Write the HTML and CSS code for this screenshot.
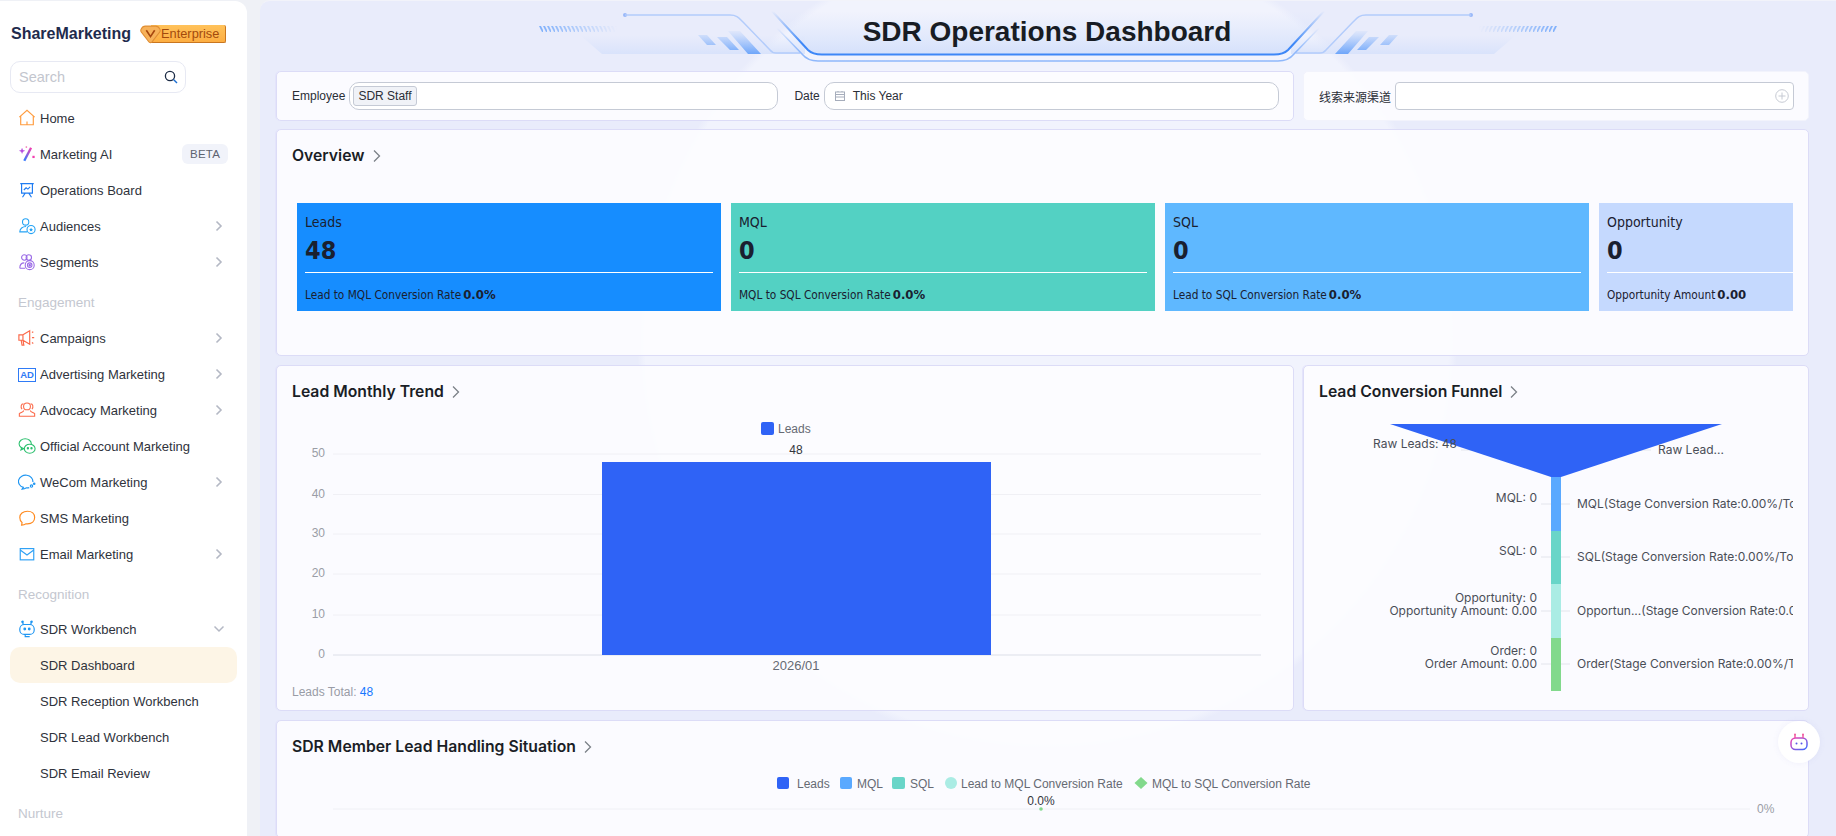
FILE: index.html
```html
<!DOCTYPE html>
<html lang="en">
<head>
<meta charset="utf-8">
<title>SDR Operations Dashboard</title>
<link rel="stylesheet" href="styles.css">
</head>
<body>
<div class="app">
  <aside class="sidebar">
    <div class="brand">
      <span class="brand-name">ShareMarketing</span>
      <span class="edition">
        <svg class="edition-gem" viewBox="0 0 20 18"><path d="M5 1h10c2 0 3 1 4 3 .5 1 .3 2-.5 3l-7 9c-1 1-2 1-3 0l-7-9C.7 6 .5 5 1 4c1-2 2-3 4-3z" fill="#f7b25a" stroke="#e08f35"/><path d="M6 5l4 6 4-6" fill="none" stroke="#a8480f" stroke-width="1.600"/></svg>
        <span class="edition-text">Enterprise</span>
      </span>
    </div>
    <div class="search">
      <span class="search-text">Search</span>
      <svg class="search-icon" viewBox="0 0 14 14"><circle cx="6" cy="6" r="4.600" fill="none" stroke="#1c2b45" stroke-width="1.300"/><path d="M9.500 9.500L13 13" stroke="#1c6fd1" stroke-width="1.400"/></svg>
    </div>
    <nav class="nav">
      <a class="nav-item"><svg class="nav-icon" viewBox="0 0 20 20" fill="none" stroke="#ff9c3f" stroke-width="1.300"><path d="M1.500 9L10 1.500 18.500 9M3 8v9.500h14V8M10 17.500v-3.500"/></svg><span>Home</span></a>
      <a class="nav-item"><svg class="nav-icon" viewBox="0 0 20 20"><defs><linearGradient id="wand" x1="0" y1="1" x2="1" y2="0"><stop offset="0" stop-color="#2f7bff"/><stop offset="1" stop-color="#f23fb0"/></linearGradient></defs><path d="M14.500 3L7 17.500" stroke="url(#wand)" stroke-width="2.600" fill="none"/><path d="M4.500 3l1 2.500 2.500 1-2.500 1-1 2.500-1-2.500L1 6.500l2.500-1z" fill="#b84fe0"/><rect x="16" y="12" width="2.500" height="2.500" fill="#f23fb0"/><rect x="8.500" y="1.500" width="1.600" height="1.600" fill="#f26fb0"/></svg><span>Marketing AI</span><span class="beta">BETA</span></a>
      <a class="nav-item"><svg class="nav-icon" viewBox="0 0 20 20" fill="none" stroke="#1f7cf2" stroke-width="1.300"><path d="M2.500 3h15M4 3v10.500h12V3M6.500 10l2.500-2.500 2 1.500 2.500-2.500M8 13.500L5 18M12 13.500l3 4.500"/></svg><span>Operations Board</span></a>
      <a class="nav-item"><svg class="nav-icon" viewBox="0 0 20 20" fill="none" stroke="#25a3f5" stroke-width="1.200"><circle cx="8.500" cy="5.500" r="3.500"/><path d="M9 10.500c-4 0-7 2.500-7 6h8"/><circle cx="14.500" cy="14" r="4.500"/><path d="M14.500 11.800l.7 1.500 1.500.2-1.100 1 .3 1.500-1.400-.8-1.400.8.300-1.500-1.100-1 1.500-.2z" fill="#25a3f5" stroke="none"/></svg><span>Audiences</span><svg class="chev" viewBox="0 0 8 12"><path d="M1.500 1.500L6 6l-4.500 4.500" fill="none" stroke="#b4b8c4" stroke-width="1.600"/></svg></a>
      <a class="nav-item"><svg class="nav-icon" viewBox="0 0 20 20" fill="none" stroke="#9a6ae6" stroke-width="1.200"><circle cx="7" cy="5" r="3"/><circle cx="12" cy="5" r="3"/><path d="M2 17c0-4 2-6 5-6M2 17h6"/><circle cx="13" cy="13.500" r="5"/><circle cx="13" cy="13.500" r="2.500"/><circle cx="13" cy="13.500" r=".8" fill="#9a6ae6"/></svg><span>Segments</span><svg class="chev" viewBox="0 0 8 12"><path d="M1.500 1.500L6 6l-4.500 4.500" fill="none" stroke="#b4b8c4" stroke-width="1.600"/></svg></a>
      <div class="nav-group">Engagement</div>
      <a class="nav-item"><svg class="nav-icon" viewBox="0 0 20 20" fill="none" stroke="#fb6a4a" stroke-width="1.300"><path d="M1 6.500h4.500v6H1zM5.500 6.500L13 2v15L5.500 12.500M3.500 12.500l1 5.500h2l-1-5.500M15.500 4l1.500-1M15.500 9.500H18M15.500 15l1.500 1"/></svg><span>Campaigns</span><svg class="chev" viewBox="0 0 8 12"><path d="M1.500 1.500L6 6l-4.500 4.500" fill="none" stroke="#b4b8c4" stroke-width="1.600"/></svg></a>
      <a class="nav-item"><span class="nav-icon ad-icon">AD</span><span>Advertising Marketing</span><svg class="chev" viewBox="0 0 8 12"><path d="M1.500 1.500L6 6l-4.500 4.500" fill="none" stroke="#b4b8c4" stroke-width="1.600"/></svg></a>
      <a class="nav-item"><svg class="nav-icon" viewBox="0 0 20 20" fill="none" stroke="#fb6a4a" stroke-width="1.200"><circle cx="10" cy="6" r="3.800"/><path d="M6.500 10.500c-1 2-3 2-5 3.500v3h17v-3c-2-1.500-4-1.500-5-3.500M6 3c-2.500 0-3.500 4 -1.500 6M14 3c2.500 0 3.500 4 1.500 6"/></svg><span>Advocacy Marketing</span><svg class="chev" viewBox="0 0 8 12"><path d="M1.500 1.500L6 6l-4.500 4.500" fill="none" stroke="#b4b8c4" stroke-width="1.600"/></svg></a>
      <a class="nav-item"><svg class="nav-icon" viewBox="0 0 20 20" fill="none" stroke="#2dc06f" stroke-width="1.200"><ellipse cx="8" cy="7.500" rx="6.800" ry="5.500"/><path d="M4 12l-.8 2.500 3-1.500"/><ellipse cx="13" cy="13" rx="6" ry="5" fill="#fff"/><circle cx="11" cy="12.500" r=".7" fill="#2dc06f"/><circle cx="15" cy="12.500" r=".7" fill="#2dc06f"/></svg><span>Official Account Marketing</span></a>
      <a class="nav-item"><svg class="nav-icon" viewBox="0 0 20 20" fill="none" stroke="#1f96f2" stroke-width="1.300"><path d="M16.500 10A8 7 0 1 0 6 16l-1.500 2c2 0 3.500-.5 5-1.500 1 0 2 0 3-.3"/><circle cx="15" cy="14.500" r="1.300"/><circle cx="18" cy="12" r=".8"/></svg><span>WeCom Marketing</span><svg class="chev" viewBox="0 0 8 12"><path d="M1.500 1.500L6 6l-4.500 4.500" fill="none" stroke="#b4b8c4" stroke-width="1.600"/></svg></a>
      <a class="nav-item"><svg class="nav-icon" viewBox="0 0 20 20" fill="none" stroke="#ff8a1f" stroke-width="1.300"><path d="M10.500 2.500c-5 0-8.500 3-8.500 7 0 2.500 1 4.500 2.500 5.500L4 18c2 0 3.500-.5 5-1.500h1.500c5 0 8-3 8-7s-3-7-8-7z"/></svg><span>SMS Marketing</span></a>
      <a class="nav-item"><svg class="nav-icon" viewBox="0 0 20 20" fill="none" stroke="#2fa1f5" stroke-width="1.300"><rect x="2.500" y="4" width="15" height="12.500"/><path d="M2.500 5.500L10 11l7.500-5.500"/></svg><span>Email Marketing</span><svg class="chev" viewBox="0 0 8 12"><path d="M1.500 1.500L6 6l-4.500 4.500" fill="none" stroke="#b4b8c4" stroke-width="1.600"/></svg></a>
      <div class="nav-group nav-group-tight">Recognition</div>
      <a class="nav-item"><svg class="nav-icon" viewBox="0 0 20 20" fill="none" stroke="#1f96f2" stroke-width="1.300"><rect x="2" y="5" width="16" height="11" rx="5"/><path d="M6 5L5 2.500M14 5l1-2.500"/><circle cx="5" cy="2" r=".8" fill="#1f96f2"/><circle cx="15" cy="2" r=".8" fill="#1f96f2"/><circle cx="7.500" cy="10" r=".9" fill="#1f96f2"/><circle cx="12.500" cy="10" r=".9" fill="#1f96f2"/><path d="M8 16v2.500h5"/></svg><span>SDR Workbench</span><svg class="chev-down" viewBox="0 0 12 8"><path d="M1.500 1.500L6 6l4.500-4.500" fill="none" stroke="#b4b8c4" stroke-width="1.500"/></svg></a>
      <a class="nav-item is-active"><span class="nav-blank"></span><span>SDR Dashboard</span></a>
      <a class="nav-item"><span class="nav-blank"></span><span>SDR Reception Workbench</span></a>
      <a class="nav-item"><span class="nav-blank"></span><span>SDR Lead Workbench</span></a>
      <a class="nav-item"><span class="nav-blank"></span><span>SDR Email Review</span></a>
      <div class="nav-group">Nurture</div>
    </nav>
  </aside>

  <main class="main">
    <header class="page-head">
      <svg class="head-art" viewBox="0 0 1036 70">
        <defs>
          <linearGradient id="panel" x1="0" y1="0" x2="0" y2="1"><stop offset="0" stop-color="#dbe4fb" stop-opacity="0"/><stop offset="1" stop-color="#d9e3fb"/></linearGradient>
          <linearGradient id="center" x1="0" y1="0" x2="0" y2="1"><stop offset="0" stop-color="#dbe4fb" stop-opacity="0"/><stop offset="1" stop-color="#d5e1fb"/></linearGradient>
          <linearGradient id="bright" x1="0" y1="0" x2="0" y2="1"><stop offset="0" stop-color="#3d87f7" stop-opacity="0"/><stop offset=".75" stop-color="#3d87f7"/></linearGradient>
          <linearGradient id="pale" x1="0" y1="0" x2="0" y2="1"><stop offset="0" stop-color="#7fb0fb" stop-opacity="0"/><stop offset=".7" stop-color="#8fb8fb"/></linearGradient>
          <linearGradient id="slash" x1="0" y1="0" x2="0" y2="1"><stop offset="0" stop-color="#8db8fb" stop-opacity=".1"/><stop offset="1" stop-color="#6ea6fa"/></linearGradient>
          <linearGradient id="hatch-fade" x1="0" y1="0" x2="1" y2="0"><stop offset="0" stop-color="#7fb0fb"/><stop offset="1" stop-color="#7fb0fb" stop-opacity="0"/></linearGradient>
          <pattern id="hatch" width="4" height="6" patternUnits="userSpaceOnUse"><path d="M0 0h2l3 6H3z" fill="#fff"/></pattern>
          <mask id="hatch-mask"><rect width="90" height="6" fill="url(#hatch)"/></mask>
          <g id="wing">
            <path d="M50 35L72 54H275V35z" fill="url(#panel)"/>
            <g mask="url(#hatch-mask)" transform="translate(9 26)"><rect width="78" height="6" fill="url(#hatch-fade)"/></g>
            <path d="M198 31H210L231 54H218zM187 37H197L209 50H200zM168 35H177L186 45H177z" fill="url(#slash)"/>
            <circle cx="95" cy="15" r="2" fill="#9ab9f8"/>
            <path d="M95 15H200c7 0 9 3 13 7L240 50c2 2.500 3 3 6 3H270" fill="none" stroke="#b3ccfb" stroke-width="1.500"/>
          </g>
        </defs>
        <path d="M246 11L278 50C281 53 285 54 292 54H744C751 54 755 53 758 50L790 11z" fill="url(#center)"/>
        <use href="#wing"/>
        <use href="#wing" transform="translate(1036 0) scale(-1 1)"/>
        <path d="M242 11L278 50C281 53 285 54.500 292 54.500H744C751 54.500 755 53 758 50L794 11" fill="none" stroke="url(#bright)" stroke-width="2"/>
        <path d="M247 28L272 54C276 59 280 61 288 61H748C756 61 760 59 764 54L789 28" fill="none" stroke="url(#pale)" stroke-width="1.500"/>
      </svg>
      <h1 class="page-title">SDR Operations Dashboard</h1>
    </header>

    <div class="board">
      <section class="card filter-card">
        <span class="filter-label">Employee</span>
        <div class="field field-employee"><span class="tag">SDR Staff</span></div>
        <span class="filter-label filter-date">Date</span>
        <div class="field field-date">
          <svg class="cal" viewBox="0 0 12 12" fill="none" stroke="#a6adbb"><rect x="1.500" y="2" width="9" height="8.500"/><path d="M1.500 4.500h9M1.500 7h9M4 1v1M8 1v1"/></svg>
          <span>This Year</span>
        </div>
      </section>
      <section class="card filter-card filter-channel">
        <span class="filter-label">线索来源渠道</span>
        <div class="field field-channel">
          <svg class="plus" viewBox="0 0 14 14" fill="none" stroke="#c6cad3"><circle cx="7" cy="7" r="6.300"/><path d="M7 3.500v7M3.500 7h7"/></svg>
        </div>
      </section>

      <section class="card overview span-2">
        <h2 class="card-title">Overview <svg class="title-chev" viewBox="0 0 8 14"><path d="M1 1.500L6.500 7 1 12.500" fill="none" stroke="#7b8088" stroke-width="1.300"/></svg></h2>
        <div class="kpis">
          <article class="kpi kpi-leads">
            <div class="kpi-name">Leads</div><div class="kpi-value">48</div>
            <div class="kpi-foot">Lead to MQL Conversion Rate<b>0.0%</b></div>
          </article>
          <article class="kpi kpi-mql">
            <div class="kpi-name">MQL</div><div class="kpi-value">0</div>
            <div class="kpi-foot">MQL to SQL Conversion Rate<b>0.0%</b></div>
          </article>
          <article class="kpi kpi-sql">
            <div class="kpi-name">SQL</div><div class="kpi-value">0</div>
            <div class="kpi-foot">Lead to SQL Conversion Rate<b>0.0%</b></div>
          </article>
          <article class="kpi kpi-opp">
            <div class="kpi-name">Opportunity</div><div class="kpi-value">0</div>
            <div class="kpi-foot">Opportunity Amount<b>0.00</b></div>
          </article>
        </div>
      </section>

      <section class="card chart-card">
        <h2 class="card-title">Lead Monthly Trend <svg class="title-chev" viewBox="0 0 8 14"><path d="M1 1.500L6.500 7 1 12.500" fill="none" stroke="#7b8088" stroke-width="1.300"/></svg></h2>
        <svg class="chart chart-trend" viewBox="0 0 1016 261" width="1016" height="261">
          <rect x="484" y="0" width="13" height="13" rx="2" fill="#2f63f6"/>
          <text class="t-legend" x="501" y="10.500">Leads</text>
          <g stroke="#f0f0f5">
            <path d="M56 32H984M56 72.500H984M56 112H984M56 152H984M56 193H984"/>
          </g>
          <path d="M56 233H984" stroke="#dcdfe8"/>
          <g class="t-axis" text-anchor="end">
            <text x="48" y="35">50</text><text x="48" y="75.500">40</text><text x="48" y="115">30</text><text x="48" y="155">20</text><text x="48" y="196">10</text><text x="48" y="236">0</text>
          </g>
          <rect x="325" y="40" width="389" height="193" fill="#2f63f6"/>
          <text class="t-value" x="519" y="32" text-anchor="middle">48</text>
          <text class="t-cat" x="519" y="248" text-anchor="middle">2026/01</text>
        </svg>
        <div class="total">Leads Total: <span class="total-num">48</span></div>
      </section>

      <section class="card chart-card">
        <h2 class="card-title">Lead Conversion Funnel <svg class="title-chev" viewBox="0 0 8 14"><path d="M1 1.500L6.500 7 1 12.500" fill="none" stroke="#7b8088" stroke-width="1.300"/></svg></h2>
        <svg class="chart chart-funnel" viewBox="0 0 489 290" width="489" height="290">
          <path d="M157 26H240M260 26H347M237 80H247M257 80H266M237 133H247M257 133H266M237 187H247M257 187H266M237 240H247M257 240H266" stroke="#e3e5ec" fill="none"/>
          <path d="M86 0H418L257 53h-10z" fill="#2f63f6"/>
          <rect x="247" y="53" width="10" height="54" fill="#5aa9ff"/>
          <rect x="247" y="107" width="10" height="53" fill="#69d5c8"/>
          <rect x="247" y="160" width="10" height="54" fill="#aaece4"/>
          <rect x="247" y="214" width="10" height="53" fill="#82d98c"/>
          <g class="t-funnel" text-anchor="end">
            <text x="153" y="23.500">Raw Leads: 48</text>
            <text x="233" y="77.500">MQL: 0</text>
            <text x="233" y="130.500">SQL: 0</text>
            <text x="233" y="178">Opportunity: 0</text>
            <text x="233" y="190.500">Opportunity Amount: 0.00</text>
            <text x="233" y="231">Order: 0</text>
            <text x="233" y="243.500">Order Amount: 0.00</text>
          </g>
          <g class="t-funnel">
            <text x="354" y="29.500">Raw Lead...</text>
            <text x="273" y="83.500">MQL(Stage Conversion Rate:0.00%/Total Conversion Rate:0.00%)</text>
            <text x="273" y="136.500">SQL(Stage Conversion Rate:0.00%/Total Conversion Rate:0.00%)</text>
            <text x="273" y="190.500">Opportun...(Stage Conversion Rate:0.00%/Total Conversion Rate:0.00%)</text>
            <text x="273" y="243.500">Order(Stage Conversion Rate:0.00%/Total Conversion Rate:0.00%)</text>
          </g>
        </svg>
      </section>

      <section class="card member-card span-2">
        <h2 class="card-title">SDR Member Lead Handling Situation <svg class="title-chev" viewBox="0 0 8 14"><path d="M1 1.500L6.500 7 1 12.500" fill="none" stroke="#7b8088" stroke-width="1.300"/></svg></h2>
        <svg class="chart" viewBox="0 0 1530 60" width="1530" height="60">
          <rect x="500" y="0" width="12" height="12" rx="2" fill="#2f63f6"/><text class="t-legend" x="520" y="10.500">Leads</text>
          <rect x="563" y="0" width="12" height="12" rx="2" fill="#5aa9ff"/><text class="t-legend" x="580" y="10.500">MQL</text>
          <rect x="615" y="0" width="13" height="12" rx="2" fill="#69d5c8"/><text class="t-legend" x="633" y="10.500">SQL</text>
          <circle cx="674" cy="6" r="6" fill="#aaece4"/><text class="t-legend" x="684" y="10.500">Lead to MQL Conversion Rate</text>
          <path d="M864 0l6.500 6-6.500 6-6.500-6z" fill="#82d98c"/><text class="t-legend" x="875" y="10.500">MQL to SQL Conversion Rate</text>
          <path d="M56 32H1473" stroke="#eff0f5"/>
          <circle cx="764" cy="32" r="1.800" fill="#82d98c"/>
          <text class="t-value" x="764" y="28" text-anchor="middle">0.0%</text>
          <text class="t-axis" x="1480" y="36">0%</text>
        </svg>
      </section>
    </div>

    <button class="assistant" type="button" aria-label="Assistant">
      <svg viewBox="0 0 20 20" width="20" height="20" fill="none"><defs><linearGradient id="bot" x1="0" y1="0" x2="1" y2="1"><stop offset="0" stop-color="#f23fb0"/><stop offset="1" stop-color="#3a6cff"/></linearGradient></defs><rect x="2" y="6" width="16" height="11.500" rx="4.500" stroke="url(#bot)" stroke-width="1.500"/><path d="M6 6V3M14 6V3" stroke="#f0569f" stroke-width="1.400"/><circle cx="6" cy="2.500" r="1" fill="#f0569f"/><circle cx="14" cy="2.500" r="1" fill="#f0569f"/><circle cx="7.500" cy="11.500" r="1" fill="#5a55e8"/><circle cx="12.500" cy="11.500" r="1" fill="#5a55e8"/></svg>
    </button>
  </main>
</div>
</body>
</html>
```

FILE: styles.css
```css
* { box-sizing: border-box; }
html, body { margin: 0; height: 100%; overflow: hidden; }
body { font-family: "Liberation Sans", Arial, sans-serif; background: #eff1f6; color: #1e2229; }

.app { display: flex; height: 836px; }

/* Sidebar */
.sidebar { flex: 0 0 247px; margin-top: 1px; background: #fff; border-radius: 0 12px 0 0; padding: 21px 10px 0; overflow: hidden; }
.brand { display: flex; align-items: center; height: 24px; padding-left: 1px; }
.brand-name { font: 700 16px "Liberation Sans", sans-serif; color: #1f2b4d; white-space: nowrap; }
.edition { display: flex; align-items: center; margin-left: 9px; }
.edition-gem { width: 21px; height: 19px; margin-right: -10px; position: relative; z-index: 1; }
.edition-text { height: 18px; line-height: 17px; padding: 0 6px 0 10px; background: linear-gradient(#ffc25a, #fdae42); border: 1px solid #c9761f; border-width: 0 1px 1px 0; border-radius: 0 2px 2px 0; color: #a34a0d; font: 12.800px/17px "Liberation Sans", sans-serif; }
.search { display: flex; align-items: center; justify-content: space-between; width: 176px; height: 32px; margin-top: 15px; padding: 0 7px 0 8px; border: 1px solid #e7e9f3; border-radius: 10px; }
.search-text { font-size: 14.500px; color: #c3c6ce; }
.search-icon { width: 14px; height: 14px; }
.nav { margin-top: 7px; }
.nav-item { display: flex; align-items: center; height: 36px; padding: 0 14px 0 8px; border-radius: 10px; font-size: 13px; color: #2f333c; white-space: nowrap; }
.nav-item.is-active { background: #fdf5e6; }
.nav-icon { flex: 0 0 18px; width: 18px; height: 18px; margin-right: 4px; }
.nav-blank { flex: 0 0 22px; }
.ad-icon { display: block; border: 1.300px solid #2f7bf6; color: #2f7bf6; font: 700 9.500px/12px "Liberation Sans", sans-serif; text-align: center; height: 14px; margin-top: 1px; }
.chev { width: 8px; height: 12px; margin-left: auto; }
.chev-down { width: 12px; height: 8px; margin-left: auto; margin-right: -2px; }
.beta { margin-left: auto; margin-right: -5px; padding: 0 8px; height: 20px; line-height: 20px; border-radius: 6px; background: #f1f3fa; color: #5c6270; font-size: 11.500px; letter-spacing: .2px; }
.nav-group { display: flex; align-items: center; height: 32px; margin-top: 6px; margin-bottom: 2px; padding-left: 8px; font-size: 13.500px; color: #c4c7d0; }
.nav-group-tight { margin-bottom: 1px; }

/* Main */
.main { position: relative; flex: 1; margin-left: 13px; height: 836px; overflow: hidden; padding-left: 16px;
  background: radial-gradient(circle 410px at 787px 340px, #f1f3fd 0 98%, transparent 100%), #e9ecfb; border-radius: 10px 0 0 0; border-top: 1px solid #f2f3fa; }
.page-head { position: relative; display: flex; justify-content: center; align-items: center; height: 62px; margin-left: -16px; width: 1576px; padding-bottom: 1px; }
.head-art { position: absolute; left: 270px; top: -1px; width: 1036px; height: 70px; }
.page-title { position: relative; margin: 0; font: 700 28px "Liberation Sans", sans-serif; color: #181c24; transform: translateX(-1px); }
.board { display: grid; grid-template-columns: 1018px 506px; column-gap: 9px; row-gap: 9px; grid-template-rows: 49px 227px 346px auto; margin-top: 8px; }
.span-2 { grid-column: span 2; }
.card { background: rgba(253,253,255,.88); border: 1px solid #dcdcf7; border-radius: 5px; overflow: hidden; box-shadow: -1px 0 0 #e4e4fb; }
.filter-card { display: flex; align-items: center; height: 50px; padding: 0 14px 0 15px; font-size: 12px; color: #2a2e36; }
.filter-channel { border-color: #f2f3fc; box-shadow: none; padding-right: 14px; }
.filter-label { white-space: nowrap; margin-right: 4px; font-family: "Liberation Sans", "Noto Sans CJK SC", sans-serif; }
.filter-date { margin-left: 16px; margin-right: 4px; }
.field { display: flex; align-items: center; height: 28px; background: #fff; border: 1px solid #c5cad5; border-radius: 10px; }
.field-employee { width: 429px; padding-left: 3px; }
.field-date { flex: 1; padding-left: 9px; gap: 7px; }
.field-channel { flex: 1; border-radius: 4px; justify-content: flex-end; padding-right: 4px; }
.tag { padding: 0 4px; height: 20px; line-height: 18px; background: #f0f2f7; border: 1px solid #c5cad5; border-radius: 3px; font-size: 12px; }
.cal { width: 12px; height: 12px; }
.plus { width: 14px; height: 14px; }

.card-title { display: flex; align-items: center; gap: 8px; margin: 0; padding: 16px 15px 0; font: 600 15.750px/20px Inter, "Noto Sans CJK SC", sans-serif; color: #1a1e26; height: 36px; white-space: nowrap; }
.title-chev { width: 8px; height: 14px; }
.kpis { display: flex; gap: 10px; margin: 37px 15px 0 20px; overflow: hidden; height: 108px; }
.kpi { flex: 0 0 424px; height: 108px; padding: 10px 0 0 8px; color: #1a2030; font-family: "DejaVu Sans", sans-serif; font-stretch: condensed; }
.kpi:last-child { flex: 0 0 195px; }
.kpi-leads { background: #168dff; }
.kpi-mql { background: #53d1c3; }
.kpi-sql { background: #5fb8ff; }
.kpi-opp { background: #c5d9fe; }
.kpi-name { font-size: 14px; line-height: 18px; }
.kpi-value { font-size: 25px; font-weight: 700; line-height: 32px; margin-top: 4px; height: 38px; margin-right: 8px; border-bottom: 1px solid #fff; }
.kpi:last-child .kpi-value { margin-right: 0; }
.kpi-foot { margin-top: 14px; font-size: 11.750px; line-height: 16px; white-space: nowrap; }
.kpi-foot b { margin-left: 2px; font-size: 13px; }

.chart-card { position: relative; }
.chart { display: block; }
.chart-trend { margin-top: 20px; }
.chart-funnel { margin-top: 22px; overflow: hidden; }
.total { padding: 1px 15px; font-size: 12px; line-height: 16px; color: #999ca6; }
.total-num { color: #1677ff; }
.t-legend { font: 12px "Liberation Sans", sans-serif; fill: #666a73; }
.t-axis text, .t-axis { font: 12px "Liberation Sans", sans-serif; fill: #9a9da6; }
.t-value { font: 12px "Liberation Sans", sans-serif; fill: #33363d; }
.t-cat { font: 13px "Liberation Sans", sans-serif; fill: #666a73; }
.t-funnel { font: 12px Inter, sans-serif; fill: #4a4e57; }
.member-card .card-title { padding-top: 14px; height: 37px; }
.member-card .chart { margin-top: 19px; }

.assistant { position: absolute; left: 1518px; top: 720px; width: 42px; height: 42px; padding: 0; display: flex; align-items: center; justify-content: center; background: #fff; border: 0; border-radius: 50%; box-shadow: 0 0 6px rgba(120,120,200,.08); }
```
